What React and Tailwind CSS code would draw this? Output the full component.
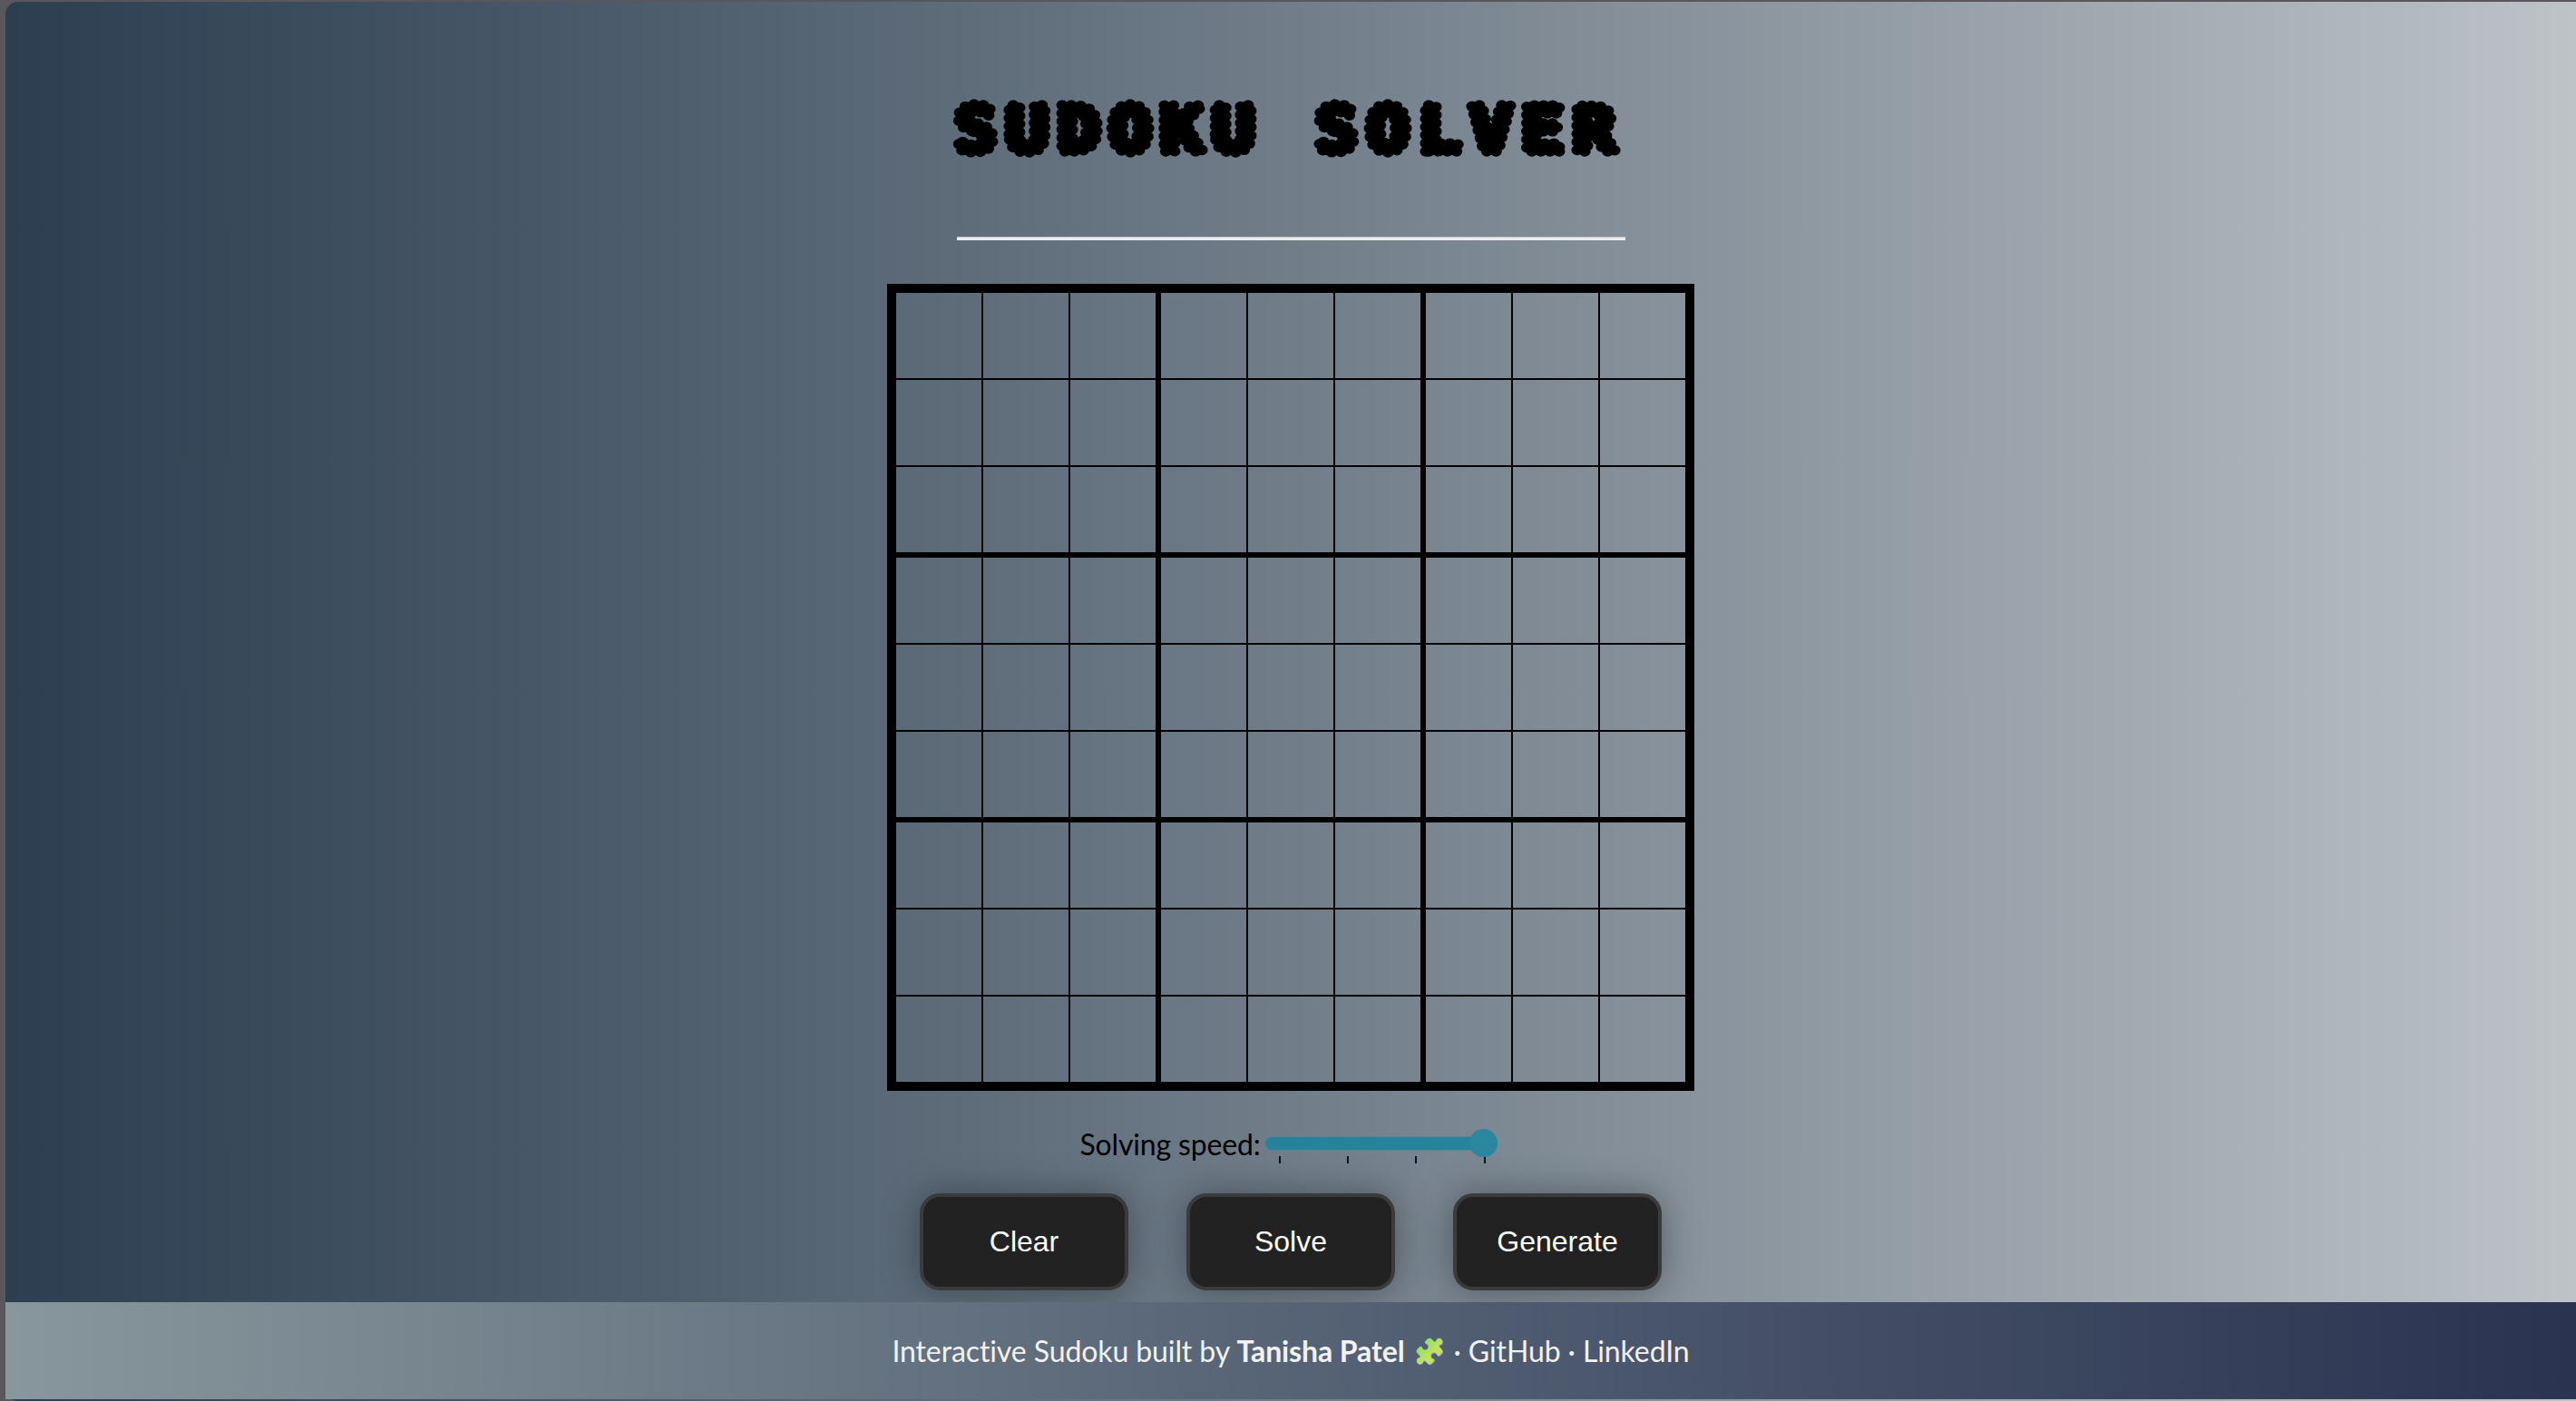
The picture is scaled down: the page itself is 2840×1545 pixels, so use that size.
export default function App() {
  const cells = [];
  for (let r = 0; r < 9; r++) {
    for (let c = 0; c < 9; c++) {
      const right = c === 8 ? "border-r-0" : c % 3 === 2 ? "border-r-[6px]" : "border-r-2";
      const bottom = r === 8 ? "border-b-0" : r % 3 === 2 ? "border-b-[6px]" : "border-b-2";
      cells.push(<div key={r + "-" + c} className={"border-solid border-black " + right + " " + bottom} />);
    }
  }
  const piece =
    "M15.39 4.39a1 1 0 0 0 1.68-.474 2.5 2.5 0 1 1 3.014 3.015 1 1 0 0 0-.474 1.68l1.683 1.682a2.414 2.414 0 0 1 0 3.414L19.61 15.39a1 1 0 0 1-1.68-.474 2.5 2.5 0 1 0-3.014 3.015 1 1 0 0 1 .474 1.68l-1.683 1.682a2.414 2.414 0 0 1-3.414 0L8.61 19.61a1 1 0 0 0-1.68.474 2.5 2.5 0 1 1-3.014-3.015 1 1 0 0 0 .474-1.68l-1.683-1.682a2.414 2.414 0 0 1 0-3.414L4.39 8.61a1 1 0 0 1 1.68.474 2.5 2.5 0 1 0 3.014-3.015 1 1 0 0 1-.474-1.68l1.683-1.682a2.414 2.414 0 0 1 3.414 0z";
  return (
    <div className="h-[1545px] w-full overflow-hidden bg-[#58585c] pl-[6px] pt-[2px]">
      <div className="h-full rounded-l-[14px] bg-gradient-to-r from-[#2c3e50] to-[#bdc3c7]">
        <div className="flex flex-col items-center">
          <h1 className="mt-[96px] h-[90px] w-[760px]">
            <svg viewBox="0 0 760 90" className="block h-[90px] w-[760px] overflow-visible">
              <text
                x="9"
                y="69"
                transform="translate(9 0) scale(1.12 1) translate(-9 0)"
                fontFamily="'DejaVu Sans Mono', monospace"
                fontWeight="700"
                fontSize="70"
                letterSpacing="8.6"
                fill="#000"
                stroke="#000"
                strokeWidth="11.5"
                strokeLinecap="round"
                strokeDasharray="0 9"
                xmlSpace="preserve"
              >
                SUDOKU SOLVER
              </text>
            </svg>
          </h1>
          <div className="mt-[73px] h-[4px] w-[737px] border-t border-solid border-[#c6c6c6] bg-[#ececec]" />
          <div className="mt-[48px] grid h-[890px] w-[890px] grid-cols-[96px_96px_100px_96px_96px_100px_96px_96px_94px] grid-rows-[96px_96px_100px_96px_96px_100px_96px_96px_94px] border-[10px] border-solid border-black">
            {cells}
          </div>
          <div className="mt-[44px] mr-[5px] flex h-[46px] items-start font-['Lato',sans-serif] text-[32px] leading-[46px] tracking-[-0.15px] text-black">
            <span className="mt-[-8px]">Solving speed:</span>
            <div className="relative ml-[4px] w-[257px] pt-[6px]">
              <div className="h-[16px] w-full rounded-full border border-solid border-[#5d8592] bg-[#27839a]" />
              <div className="absolute top-[-2px] right-0 h-[31px] w-[31px] rounded-full bg-[#2a879e]" />
              <div className="mt-[6px] flex w-[244px] justify-between pl-[16px]">
                <div className="h-[8px] w-[2px] bg-[#111]" />
                <div className="h-[8px] w-[2px] bg-[#111]" />
                <div className="h-[8px] w-[2px] bg-[#111]" />
                <div className="h-[8px] w-[2px] bg-[#111]" />
              </div>
            </div>
          </div>
          <div className="mt-[23px] flex gap-[64px] font-['Liberation_Sans',Arial,sans-serif] text-[32px] text-white">
            {["Clear", "Solve", "Generate"].map((t) => (
              <button
                key={t}
                className="h-[107px] w-[230px] rounded-[22px] border-[4px] border-solid border-[#3b3b3b] bg-[#222222] pb-[2px] shadow-[0_0_40px_rgba(0,0,0,0.35)]"
              >
                {t}
              </button>
            ))}
          </div>
          <footer className="mt-[13px] flex h-[107px] w-full items-center justify-center gap-[10px] bg-gradient-to-r from-[#88979c] to-[#2a3350] pt-[1px] font-['Lato',sans-serif] text-[32px] tracking-[-0.1px] text-[#f2f2f2]">
            <span>
              Interactive Sudoku built by <b className="font-bold">Tanisha Patel</b>
            </span>
            <svg viewBox="0 0 24 24" className="h-[34px] w-[34px]">
              <defs>
                <linearGradient id="pz" x1="0" y1="0" x2="1" y2="1">
                  <stop offset="0" stopColor="#72e06c" />
                  <stop offset="0.65" stopColor="#c6e35c" />
                  <stop offset="1" stopColor="#a8dc70" />
                </linearGradient>
              </defs>
              <path fill="#b48be0" transform="translate(0.5 0.6)" d={piece} />
              <path fill="url(#pz)" d={piece} />
            </svg>
            <span>· GitHub · LinkedIn</span>
          </footer>
        </div>
      </div>
    </div>
  );
}
